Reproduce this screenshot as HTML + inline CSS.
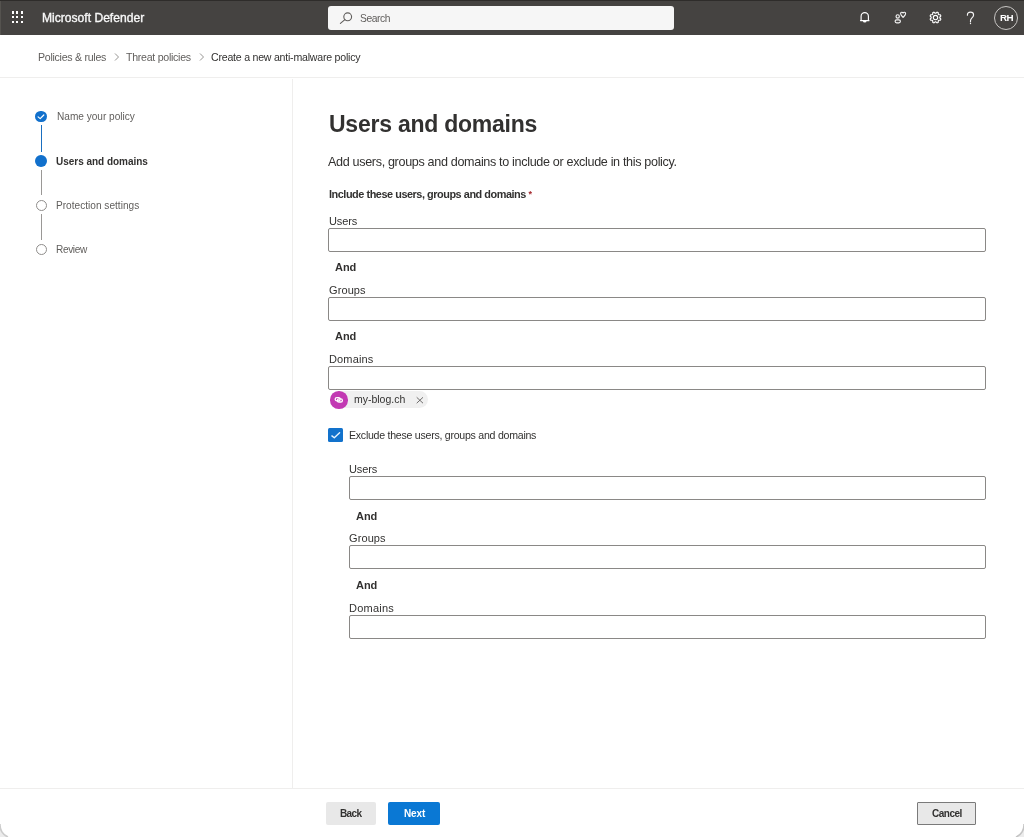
<!DOCTYPE html>
<html><head><meta charset="utf-8">
<style>
html,body{margin:0;padding:0;width:1024px;height:837px;overflow:hidden;background:#fff;}
body{position:relative;font-family:"Liberation Sans",sans-serif;}
.t{position:absolute;white-space:nowrap;line-height:1;will-change:transform;}
.b{font-weight:bold;}
.hdr{position:absolute;left:0;top:0;width:1024px;height:35px;background:#454341;}
.hdrtop{position:absolute;left:0;top:0;width:1024px;height:1px;background:#2e2c2a;}
.dot{position:absolute;width:2.4px;height:2.4px;background:#fff;}
.search{position:absolute;left:328px;top:6px;width:346px;height:23.5px;background:#f6f6f6;border-radius:3px;}
.hl{position:absolute;background:#efeeed;}
.inp{position:absolute;height:22px;border:1px solid #8a8886;border-radius:2px;background:#fff;}
.step{position:absolute;box-sizing:border-box;border-radius:50%;}
.sline{position:absolute;width:1.4px;}
</style></head>
<body>
<!-- header -->
<div class="hdr"></div>
<div class="hdrtop"></div>
<div class="dot" style="left:11.6px;top:11.4px"></div>
<div class="dot" style="left:16.1px;top:11.4px"></div>
<div class="dot" style="left:20.6px;top:11.4px"></div>
<div class="dot" style="left:11.6px;top:16px"></div>
<div class="dot" style="left:16.1px;top:16px"></div>
<div class="dot" style="left:20.6px;top:16px"></div>
<div class="dot" style="left:11.6px;top:20.5px"></div>
<div class="dot" style="left:16.1px;top:20.5px"></div>
<div class="dot" style="left:20.6px;top:20.5px"></div>
<div class="t" style="left:41.5px;top:12.1px;font-size:12.1px;color:#f8f8f8;letter-spacing:0px;-webkit-text-stroke:0.35px #f8f8f8">Microsoft Defender</div>

<div class="search"></div>
<svg style="position:absolute;left:336px;top:9px" width="18" height="18" viewBox="0 0 18 18">
  <circle cx="11.7" cy="7.8" r="3.9" fill="none" stroke="#605e5c" stroke-width="1.1"/>
  <line x1="4.4" y1="14.4" x2="8.9" y2="10.6" stroke="#605e5c" stroke-width="1.1" stroke-linecap="round"/>
</svg>
<div class="t" style="left:359.9px;top:14.0px;font-size:10.3px;color:#605e5c;letter-spacing:-0.45px">Search</div>

<!-- header icons -->
<svg style="position:absolute;left:855px;top:8px" width="20" height="18" viewBox="0 0 20 18" fill="none" stroke="#fff" stroke-width="1.15">
  <path d="M6.1 12.1 V8.25 A3.65 3.65 0 0 1 13.4 8.25 V12.1 L14 12.6 H5.5 Z" stroke-linejoin="round"/>
  <path d="M7.9 12.7 A1.85 1.85 0 0 0 11.6 12.7 Z" fill="#fff" stroke="none"/>
</svg>
<svg style="position:absolute;left:888px;top:7px" width="24" height="20" viewBox="0 0 24 20" fill="none" stroke="#f4f4f4" stroke-width="1.15">
  <circle cx="9.7" cy="9.4" r="1.65"/>
  <rect x="7.1" y="12.8" width="5.3" height="3.1" rx="1.55"/>
  <path d="M15.1 6.0 C14.6 5.0 12.6 4.9 12.6 6.6 C12.6 8.2 14.2 9.4 15.1 10.4 C16.0 9.4 17.6 8.2 17.6 6.6 C17.6 4.9 15.6 5.0 15.1 6.0 Z" stroke-linejoin="round"/>
</svg>
<svg style="position:absolute;left:926px;top:8px" width="19" height="19" viewBox="0 0 19 19" fill="none" stroke="#fff" stroke-width="1.15">
  <path d="M9.50 5.15 L9.67 5.15 L9.84 5.16 L10.02 5.14 L10.23 4.90 L10.47 4.65 L10.72 4.40 L11.00 4.19 L11.22 4.22 L11.42 4.29 L11.62 4.37 L11.82 4.46 L12.02 4.55 L12.19 4.69 L12.24 5.03 L12.25 5.38 L12.24 5.74 L12.22 6.06 L12.33 6.19 L12.45 6.31 L12.58 6.42 L12.69 6.55 L12.81 6.67 L12.94 6.78 L13.26 6.76 L13.62 6.75 L13.97 6.76 L14.31 6.81 L14.45 6.98 L14.54 7.18 L14.63 7.38 L14.71 7.58 L14.78 7.78 L14.81 8.00 L14.60 8.28 L14.35 8.53 L14.10 8.77 L13.86 8.98 L13.84 9.16 L13.85 9.33 L13.85 9.50 L13.85 9.67 L13.84 9.84 L13.86 10.02 L14.10 10.23 L14.35 10.47 L14.60 10.72 L14.81 11.00 L14.78 11.22 L14.71 11.42 L14.63 11.62 L14.54 11.82 L14.45 12.02 L14.31 12.19 L13.97 12.24 L13.62 12.25 L13.26 12.24 L12.94 12.22 L12.81 12.33 L12.69 12.45 L12.58 12.58 L12.45 12.69 L12.33 12.81 L12.22 12.94 L12.24 13.26 L12.25 13.62 L12.24 13.97 L12.19 14.31 L12.02 14.45 L11.82 14.54 L11.62 14.63 L11.42 14.71 L11.22 14.78 L11.00 14.81 L10.72 14.60 L10.47 14.35 L10.23 14.10 L10.02 13.86 L9.84 13.84 L9.67 13.85 L9.50 13.85 L9.33 13.85 L9.16 13.84 L8.98 13.86 L8.77 14.10 L8.53 14.35 L8.28 14.60 L8.00 14.81 L7.78 14.78 L7.58 14.71 L7.38 14.63 L7.18 14.54 L6.98 14.45 L6.81 14.31 L6.76 13.97 L6.75 13.62 L6.76 13.26 L6.78 12.94 L6.67 12.81 L6.55 12.69 L6.42 12.58 L6.31 12.45 L6.19 12.33 L6.06 12.22 L5.74 12.24 L5.38 12.25 L5.03 12.24 L4.69 12.19 L4.55 12.02 L4.46 11.82 L4.37 11.62 L4.29 11.42 L4.22 11.22 L4.19 11.00 L4.40 10.72 L4.65 10.47 L4.90 10.23 L5.14 10.02 L5.16 9.84 L5.15 9.67 L5.15 9.50 L5.15 9.33 L5.16 9.16 L5.14 8.98 L4.90 8.77 L4.65 8.53 L4.40 8.28 L4.19 8.00 L4.22 7.78 L4.29 7.58 L4.37 7.38 L4.46 7.18 L4.55 6.98 L4.69 6.81 L5.03 6.76 L5.38 6.75 L5.74 6.76 L6.06 6.78 L6.19 6.67 L6.31 6.55 L6.42 6.42 L6.55 6.31 L6.67 6.19 L6.78 6.06 L6.76 5.74 L6.75 5.38 L6.76 5.03 L6.81 4.69 L6.98 4.55 L7.18 4.46 L7.38 4.37 L7.58 4.29 L7.78 4.22 L8.00 4.19 L8.28 4.40 L8.53 4.65 L8.77 4.90 L8.98 5.14 L9.16 5.16 L9.33 5.15 Z" stroke-linejoin="round"/>
  <circle cx="9.5" cy="9.5" r="2.2"/>
</svg>
<svg style="position:absolute;left:962px;top:9px" width="18" height="18" viewBox="0 0 18 18" fill="none" stroke="#f4f4f4" stroke-width="1.15">
  <path d="M5.4 6.2 C5.4 4.3 6.9 3.2 8.5 3.2 C10.3 3.2 11.6 4.5 11.6 6.1 C11.6 7.6 10.6 8.4 9.6 9.3 C8.9 10 8.5 10.6 8.5 11.8 V12.8" stroke-linecap="round"/>
  <circle cx="8.5" cy="14.5" r="0.7" fill="#f4f4f4" stroke="none"/>
</svg>
<div style="position:absolute;left:994px;top:5.7px;width:24px;height:24px;box-sizing:border-box;border:1px solid #c8c6c4;border-radius:50%"></div>
<div class="t b" style="left:1000.2px;top:13.4px;font-size:9.8px;color:#fff;letter-spacing:-0.6px">RH</div>

<!-- breadcrumb -->
<div class="t" style="left:38px;top:51.8px;font-size:10.6px;color:#605e5c;letter-spacing:-0.27px">Policies &amp; rules</div>
<svg style="position:absolute;left:112px;top:51px" width="10" height="12" viewBox="0 0 10 12" fill="none" stroke="#8a8886" stroke-width="0.9"><path d="M3 2.5 L6.5 6 L3 9.5"/></svg>
<div class="t" style="left:126.3px;top:51.8px;font-size:10.6px;color:#605e5c;letter-spacing:-0.27px">Threat policies</div>
<svg style="position:absolute;left:197px;top:51px" width="10" height="12" viewBox="0 0 10 12" fill="none" stroke="#8a8886" stroke-width="0.9"><path d="M3 2.5 L6.5 6 L3 9.5"/></svg>
<div class="t" style="left:211.1px;top:51.8px;font-size:10.6px;color:#323130;letter-spacing:-0.23px">Create a new anti-malware policy</div>

<div class="hl" style="left:0;top:77px;width:1024px;height:1px"></div>
<div class="hl" style="left:292px;top:79px;width:1px;height:709px"></div>
<div class="hl" style="left:0;top:788px;width:1024px;height:1px"></div>

<!-- left nav -->
<div class="step" style="left:35.3px;top:110.5px;width:11.8px;height:11.8px;background:#1170cc"></div>
<svg style="position:absolute;left:35.3px;top:110.5px" width="12" height="12" viewBox="0 0 12 12" fill="none" stroke="#fff" stroke-width="1.2"><path d="M3.1 5.9 L5.2 7.6 L8.8 4.0" stroke-linecap="round" stroke-linejoin="round"/></svg>
<div class="sline" style="left:40.5px;top:125.2px;height:26.4px;background:#1a6fc0"></div>
<div class="step" style="left:35.3px;top:155.1px;width:11.8px;height:11.8px;background:#1170cc"></div>
<div class="sline" style="left:40.5px;top:169.7px;height:25.6px;background:#9a9896"></div>
<div class="step" style="left:35.5px;top:199.6px;width:11.6px;height:11.6px;border:1.5px solid #8f8d8b"></div>
<div class="sline" style="left:40.5px;top:214.4px;height:25.6px;background:#9a9896"></div>
<div class="step" style="left:35.5px;top:243.9px;width:11.6px;height:11.6px;border:1.5px solid #8f8d8b"></div>

<div class="t" style="left:56.7px;top:112.4px;font-size:10.1px;color:#605e5c;letter-spacing:-0.01px">Name your policy</div>
<div class="t b" style="left:56.3px;top:156.6px;font-size:10px;color:#323130;letter-spacing:-0.02px">Users and domains</div>
<div class="t" style="left:56.3px;top:201px;font-size:10.1px;color:#605e5c;letter-spacing:0.01px">Protection settings</div>
<div class="t" style="left:56.3px;top:245.3px;font-size:10.1px;color:#605e5c;letter-spacing:-0.37px">Review</div>

<!-- main -->
<div class="t b" style="left:329px;top:112.7px;font-size:23px;color:#323130;letter-spacing:-0.24px">Users and domains</div>
<div class="t" style="left:328px;top:156px;font-size:12.6px;color:#323130;letter-spacing:-0.34px">Add users, groups and domains to include or exclude in this policy.</div>
<div class="t b" style="left:329px;top:189px;font-size:10.9px;color:#323130;letter-spacing:-0.46px">Include these users, groups and domains <span style="color:#a4262c;font-size:9px;position:relative;top:-1px">*</span></div>

<div class="t" style="left:329px;top:215.7px;font-size:11px;color:#323130;letter-spacing:-0.1px">Users</div>
<div class="inp" style="left:328px;top:228px;width:656px"></div>
<div class="t b" style="left:335px;top:261.5px;font-size:11px;color:#323130;letter-spacing:-0.05px">And</div>
<div class="t" style="left:329px;top:284.7px;font-size:11px;color:#323130;letter-spacing:0.1px">Groups</div>
<div class="inp" style="left:328px;top:297px;width:656px"></div>
<div class="t b" style="left:335px;top:330.7px;font-size:11px;color:#323130;letter-spacing:-0.05px">And</div>
<div class="t" style="left:329px;top:354.1px;font-size:11px;color:#323130;letter-spacing:0.15px">Domains</div>
<div class="inp" style="left:328px;top:366px;width:656px"></div>

<!-- chip -->
<div style="position:absolute;left:330px;top:391px;width:98.4px;height:17px;border-radius:8.5px;background:#f0f0f0"></div>
<div style="position:absolute;left:330px;top:391px;width:17.5px;height:17.5px;border-radius:50%;background:#c239b3"></div>
<svg style="position:absolute;left:330px;top:391px" width="17.5" height="17.5" viewBox="0 0 17.5 17.5" fill="none" stroke="#fff" stroke-width="1.3">
  <rect x="5.2" y="6.6" width="5" height="3.2" rx="1.6"/><rect x="7.4" y="7.8" width="5" height="3.2" rx="1.6"/>
</svg>
<div class="t" style="left:354px;top:394.3px;font-size:10.5px;color:#323130;letter-spacing:-0.01px">my-blog.ch</div>
<svg style="position:absolute;left:415px;top:396px" width="10" height="9" viewBox="0 0 10 9" fill="none" stroke="#605e5c" stroke-width="0.9"><path d="M1.7 1.3 L8 7.2 M8 1.3 L1.7 7.2"/></svg>

<!-- checkbox -->
<div style="position:absolute;left:328.2px;top:427.6px;width:14.7px;height:14.7px;border-radius:1.5px;background:#1272cc"></div>
<svg style="position:absolute;left:328.2px;top:427.6px" width="15" height="15" viewBox="0 0 15 15" fill="none" stroke="#e8f4ff" stroke-width="1.4"><path d="M3.9 7.9 L6.3 9.8 L11.6 4.8" stroke-linecap="round" stroke-linejoin="round"/></svg>
<div class="t" style="left:349.3px;top:429.6px;font-size:10.6px;color:#323130;letter-spacing:-0.26px">Exclude these users, groups and domains</div>

<!-- exclude -->
<div class="t" style="left:349px;top:464.2px;font-size:11px;color:#323130;letter-spacing:-0.1px">Users</div>
<div class="inp" style="left:349px;top:476px;width:635px"></div>
<div class="t b" style="left:355.6px;top:510.7px;font-size:11px;color:#323130;letter-spacing:-0.05px">And</div>
<div class="t" style="left:349px;top:533.2px;font-size:11px;color:#323130;letter-spacing:0.1px">Groups</div>
<div class="inp" style="left:349px;top:545px;width:635px"></div>
<div class="t b" style="left:355.6px;top:579.8px;font-size:11px;color:#323130;letter-spacing:-0.05px">And</div>
<div class="t" style="left:349px;top:602.5px;font-size:11px;color:#323130;letter-spacing:0.22px">Domains</div>
<div class="inp" style="left:349px;top:615px;width:635px"></div>

<!-- window corners -->
<svg style="position:absolute;left:0;top:823px" width="14" height="14" viewBox="0 0 14 14"><path d="M0 1 A13 13 0 0 0 8 14 H0 Z" fill="#ececec"/><path d="M0 1 A13 13 0 0 0 8 14" fill="none" stroke="#cccccc" stroke-width="1.6"/></svg>
<svg style="position:absolute;left:1010px;top:823px" width="14" height="14" viewBox="0 0 14 14"><path d="M14 1 A13 13 0 0 1 6 14 H14 Z" fill="#ececec"/><path d="M14 1 A13 13 0 0 1 6 14" fill="none" stroke="#c4c4c4" stroke-width="1.6"/></svg>
<div style="position:absolute;left:0;top:1px;width:1px;height:34px;background:#55534f"></div>
<!-- footer -->
<div style="position:absolute;left:326px;top:802px;width:50px;height:23px;background:#e8e8e8;border-radius:2px"></div>
<div class="t b" style="left:340.3px;top:808.5px;font-size:10px;color:#323130;letter-spacing:-0.65px">Back</div>
<div style="position:absolute;left:388px;top:802px;width:52px;height:23px;background:#0a78d4;border-radius:2px"></div>
<div class="t b" style="left:403.6px;top:808.5px;font-size:10px;color:#fff;letter-spacing:-0.15px">Next</div>
<div style="position:absolute;left:917px;top:802px;width:59px;height:22.5px;box-sizing:border-box;background:#e8e8e8;border:1px solid #7a7a7a;border-radius:1px"></div>
<div class="t b" style="left:931.5px;top:808.5px;font-size:10px;color:#323130;letter-spacing:-0.5px">Cancel</div>
</body></html>
